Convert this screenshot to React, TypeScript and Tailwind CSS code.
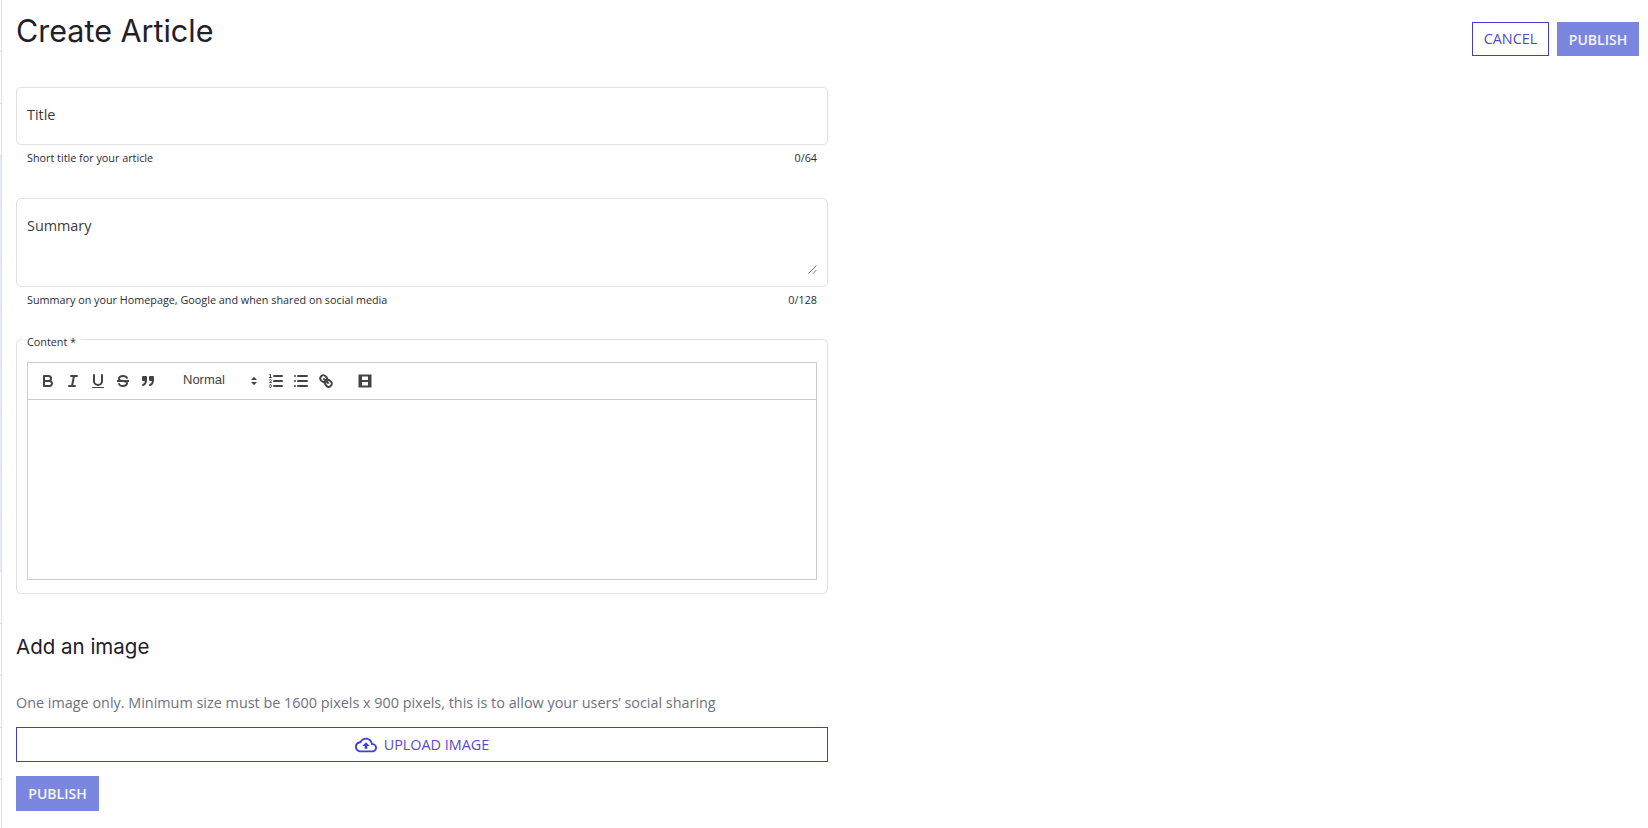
import React from "react";

const sans = "font-['Open_Sans',sans-serif]";

function Publish({ top }: { top?: boolean }) {
  return (
    <button
      className={
        top
          ? "h-[34px] w-[82px] bg-[#7b87df] text-[14px] font-semibold text-[#f4f5fd]"
          : "h-[35px] w-[83px] bg-[#7b87df] text-[14px] font-semibold text-[#f4f5fd]"
      }
    >
      PUBLISH
    </button>
  );
}

function Helper({ left, right }: { left: string; right: string }) {
  return (
    <div className="flex h-[26px] items-center justify-between px-[11px] text-[10.8px] text-[#2b2b3a]">
      <span>{left}</span>
      <span>{right}</span>
    </div>
  );
}

function Btn({ children }: { children: React.ReactNode }) {
  return <span className="flex h-[18px] w-[25px] items-center justify-center">{children}</span>;
}

function Icon({ children }: { children: React.ReactNode }) {
  return (
    <svg width="18" height="18" viewBox="0 0 18 18" fill="none" stroke="#444" strokeWidth="2" strokeLinecap="round" strokeLinejoin="round">
      {children}
    </svg>
  );
}

function Toolbar() {
  return (
    <div className="flex h-[37px] shrink-0 items-center border-b border-[#ccc] pl-[7px] text-[#444]">
      <Btn>
        <Icon>
          <path d="M5,4H9.5A2.5,2.5,0,0,1,12,6.500v0A2.500,2.500,0,0,1,9.500,9H5V4Z" />
          <path d="M5,9h5.500A2.500,2.500,0,0,1,13,11.500v0A2.500,2.500,0,0,1,10.500,14H5V9Z" />
        </Icon>
      </Btn>
      <Btn>
        <Icon>
          <path d="M7 4H13M5 14H11M8 14 10 4" />
        </Icon>
      </Btn>
      <Btn>
        <Icon>
          <path d="M5,3V9a4.012,4.012,0,0,0,4,4H9a4.012,4.012,0,0,0,4-4V3" />
          <rect x="3" y="15" width="12" height="1" rx="0.5" fill="#444" stroke="none" />
        </Icon>
      </Btn>
      <Btn>
        <Icon>
          <path d="M3 9H15" strokeLinecap="butt" />
          <path
            stroke="none"
            fill="#444"
            d="M9.007,8C6.542,7.791,6,7.519,6,6.500,6,5.792,7.283,5,9,5c1.571,0,2.765.679,2.969,1.309a1,1,0,0,0,1.900-.617C13.356,4.106,11.354,3,9,3,6.200,3,4,4.538,4,6.500a3.200,3.200,0,0,0,.500,1.843Z"
          />
          <path
            stroke="none"
            fill="#444"
            d="M8.984,10C11.457,10.208,12,10.479,12,11.500c0,.708-1.283,1.500-3,1.500-1.571,0-2.765-.679-2.969-1.309a1,1,0,1,0-1.900.617C4.644,13.894,6.646,15,9,15c2.800,0,5-1.538,5-3.500a3.200,3.200,0,0,0-.500-1.843Z"
          />
        </Icon>
      </Btn>
      <Btn>
        <Icon>
          <rect x="4" y="5" width="3" height="3" fill="#444" />
          <rect x="11" y="5" width="3" height="3" fill="#444" />
          <path d="M7,8c0,4.031-3,5-3,5" />
          <path d="M14,8c0,4.031-3,5-3,5" />
        </Icon>
      </Btn>
      <div className="relative ml-[15px] flex h-[24px] w-[88px] items-center pl-[8px]">
        <span className="relative top-[-1px] font-['Liberation_Sans',sans-serif] text-[13px] text-[#444]">Normal</span>
        <svg className="absolute right-[2px] top-[5px]" width="14" height="14" viewBox="0 0 14 14" fill="#444">
          <path d="M4 6 7 2.800 10 6zM4 8 7 11.200 10 8z" />
        </svg>
      </div>
      <Btn>
        <Icon>
          <path d="M7 4H15M7 9H15M7 14H15" />
          <g strokeWidth="1">
            <path d="M2.500 5.500H4.500" />
            <path d="M4.500,10.500h-2c0-.234,1.850-1.076,1.850-2.234A0.959,0.959,0,0,0,2.500,8.156" />
            <path d="M2.500,14.846a0.959,0.959,0,0,0,1.850-.109A0.700,0.700,0,0,0,3.750,14a0.688,0.688,0,0,0,.600-0.736,0.959,0.959,0,0,0-1.850-.109" />
          </g>
          <path
            stroke="none"
            fill="#444"
            d="M3.500,6A0.500,0.500,0,0,1,3,5.500V3.085l-0.276.138A0.500,0.500,0,0,1,2.053,3c-0.124-.247-0.023-0.324.224-0.447l1-.500A0.500,0.500,0,0,1,4,2.500v3A0.500,0.500,0,0,1,3.500,6Z"
          />
        </Icon>
      </Btn>
      <Btn>
        <Icon>
          <path d="M6 4H15M6 9H15M6 14H15M3 4H3M3 9H3M3 14H3" />
        </Icon>
      </Btn>
      <Btn>
        <Icon>
          <path d="M7 7 11 11" />
          <path d="M8.900,4.577a3.476,3.476,0,0,1,.360,4.679A3.476,3.476,0,0,1,4.577,8.900C3.185,7.500,2.035,6.400,4.217,4.217S7.500,3.185,8.900,4.577Z" />
          <path d="M13.423,9.100a3.476,3.476,0,0,0-4.679-.360,3.476,3.476,0,0,0,.360,4.679c1.392,1.392,2.500,2.542,4.679.360S14.815,10.500,13.423,9.100Z" />
        </Icon>
      </Btn>
      <span className="ml-[14px]">
        <Btn>
          <svg width="18" height="18" viewBox="0 0 18 18" fill="#444">
            <path
              fillRule="evenodd"
              d="M2.500 2.500h13v13h-13zM6 4.500v3.500h6V4.500zM6 10v3.500h6V10z"
            />
          </svg>
        </Btn>
      </span>
    </div>
  );
}

function SidebarEdge() {
  const rows = Array.from({ length: 16 }, (_, i) => i);
  return (
    <div className="flex h-[828px] w-[2px] shrink-0 flex-col overflow-hidden border-r border-[#e0e0e0]">
      {rows.map((i) => (
        <div
          key={i}
          className={
            i >= 3 && i <= 10
              ? "h-[52px] shrink-0 border-b border-[#e0e0e0] bg-[#e6eaf8]"
              : "h-[52px] shrink-0 border-b border-[#e0e0e0] bg-white"
          }
        />
      ))}
    </div>
  );
}

export default function App() {
  return (
    <div className={`${sans} flex h-[828px] overflow-hidden bg-white`}>
      <SidebarEdge />
      <main className="flex min-w-0 flex-1 flex-col pl-[14px] pr-[9px]">
        <header className="flex items-start justify-between">
          <h1 className="mt-[10px] font-['Inter',sans-serif] text-[30.5px] font-normal leading-[42px] text-[#1f2028]">
            Create Article
          </h1>
          <div className="mt-[22px] flex gap-[8px]">
            <button className="h-[34px] w-[77px] border border-[#3f3fd0] text-[14.4px] text-[#4b4bd0]">CANCEL</button>
            <Publish top />
          </div>
        </header>

        <div className="w-[812px]">
          <div className="mt-[31px] flex h-[58px] items-center rounded-[5px] border border-[#e0e0e0] px-[10px] pb-[3px] text-[14.4px] text-[#3a3a3a]">
            Title
          </div>
          <Helper left="Short title for your article" right="0/64" />

          <div className="relative mt-[27px] h-[89px] rounded-[5px] border border-[#e0e0e0] px-[10px] pt-[17px] text-[14.4px] leading-[20px] text-[#3a3a3a]">
            Summary
            <svg className="absolute bottom-[12px] right-[10px]" width="9" height="9" viewBox="0 0 9 9" stroke="#555" strokeWidth="0.800">
              <path d="M0.500 8.500 8.500 0.500M5 8.500 8.500 5" />
            </svg>
          </div>
          <Helper left="Summary on your Homepage, Google and when shared on social media" right="0/128" />

          <fieldset className="mt-[20px] h-[261px] rounded-[5px] border border-[#e0e0e0] px-[10px]">
            <legend className="ml-[-5px] px-[5px] text-[10.8px] leading-[12px] text-[#2b2b3a]">
              <span className="relative top-[3px]">Content *</span>
            </legend>
            <div className="mt-[17px] flex h-[218px] flex-col border border-[#ccc]">
              <Toolbar />
            </div>
          </fieldset>

          <h2 className="mt-[39px] font-['Inter',sans-serif] text-[20.5px] font-normal leading-[28px] text-[#1f2028]">Add an image</h2>
          <p className="mt-[32px] text-[14.4px] leading-[20px] text-[#70707f]">
            One image only. Minimum size must be 1600 pixels x 900 pixels, this is to allow your users’ social sharing
          </p>
          <button className="mt-[14px] flex h-[35px] w-full items-center justify-center gap-[7px] border border-[#3f3fd0] text-[14.4px] text-[#5a48d0]">
            <svg width="22" height="22" viewBox="0 0 24 24" fill="#3f3fd0">
              <path d="M19.350 10.040C18.670 6.590 15.640 4 12 4 9.110 4 6.600 5.640 5.350 8.040 2.340 8.360 0 10.910 0 14c0 3.310 2.690 6 6 6h13c2.760 0 5-2.240 5-5 0-2.640-2.050-4.780-4.650-4.960zM19 18H6c-2.210 0-4-1.790-4-4 0-2.050 1.530-3.760 3.560-3.970l1.070-.110.500-.950C8.080 7.140 9.940 6 12 6c2.620 0 4.880 1.860 5.390 4.430l.300 1.500 1.530.110c1.560.100 2.780 1.410 2.780 2.960 0 1.650-1.350 3-3 3zM8 13h2.550v3h2.900v-3H16l-4-4z" />
            </svg>
            UPLOAD IMAGE
          </button>
          <div className="mt-[14px]">
            <Publish />
          </div>
        </div>
      </main>
    </div>
  );
}
